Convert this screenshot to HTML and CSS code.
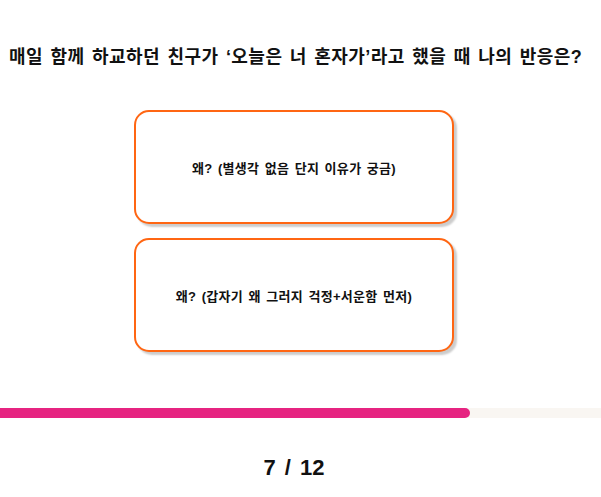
FILE: index.html
```html
<!DOCTYPE html>
<html lang="ko">
<head>
<meta charset="utf-8">
<title>Quiz</title>
<link rel="stylesheet" href="styles.css">
</head>
<body>
<main class="page">
  <h1 class="question">매일 함께 하교하던 친구가 ‘오늘은 너 혼자가’라고 했을 때 나의 반응은?</h1>
  <div class="options">
    <button class="option">왜? (별생각 없음 단지 이유가 궁금)</button>
    <button class="option">왜? (갑자기 왜 그러지 걱정+서운함 먼저)</button>
  </div>
</main>
<div class="progress"><div class="progress-fill" style="width: 78.2%"></div></div>
<div class="page"><p class="counter">7 / 12</p></div>
</body>
</html>
```
FILE: styles.css
```css
html, body {
  margin: 0;
  padding: 0;
  background: #ffffff;
}
body {
  font-family: "Liberation Sans", "Noto Sans CJK KR", sans-serif;
  color: #111111;
}
.page {
  width: 572px;
  margin-left: 8px;
  display: flex;
  flex-direction: column;
  align-items: center;
}
.question {
  margin: 0;
  padding-top: 45px;
  font-size: 18px;
  line-height: 24px;
  font-weight: 700;
  white-space: nowrap;
  align-self: flex-start;
  padding-left: 1px;
  letter-spacing: 0.45px;
  word-spacing: 2px;
}
.options {
  margin-top: 41px;
  display: flex;
  flex-direction: column;
  gap: 14px;
}
.option {
  box-sizing: border-box;
  width: 320px;
  height: 114px;
  border: 2px solid #ff6613;
  border-radius: 15px;
  background: #ffffff;
  box-shadow: 3px 3px 2px rgba(0, 0, 0, 0.2);
  display: flex;
  align-items: center;
  justify-content: center;
  font-family: "Liberation Sans", "Noto Sans CJK KR", sans-serif;
  font-size: 13px;
  font-weight: 700;
  color: #111111;
  padding: 0;
  letter-spacing: 0.3px;
  word-spacing: 1.5px;
}
.progress {
  margin-top: 56px;
  height: 10px;
  background: #f9f6f2;
}
.progress-fill {
  height: 100%;
  background: #e62481;
  border-radius: 0 5px 5px 0;
}
.counter {
  margin: 37px 0 0;
  font-size: 22px;
  line-height: 26px;
  font-weight: 700;
  color: #111111;
  word-spacing: 3px;
}
```
